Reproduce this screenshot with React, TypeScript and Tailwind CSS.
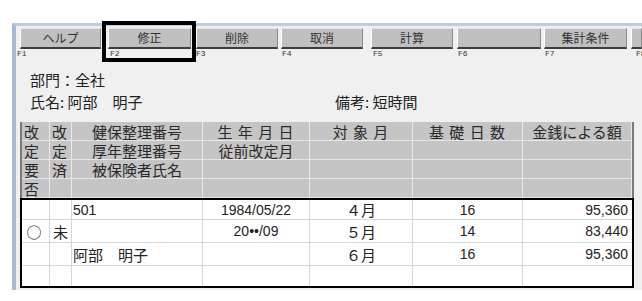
import React from 'react'

const tools = [
  { label: 'ヘルプ', f: 'F1', col: 'w-[88px]', btn: 'ml-[3px] w-[81px]', fl: 'ml-0' },
  { label: '修正', f: 'F2', col: 'w-[89px]', btn: 'ml-[3px] w-[83px]', fl: 'ml-[5px]' },
  { label: '削除', f: 'F3', col: 'w-[86px]', btn: 'ml-[2px] w-[82px]', fl: 'ml-[2px]' },
  { label: '取消', f: 'F4', col: 'w-[89px]', btn: 'ml-[1px] w-[82px]', fl: 'ml-[2px]' },
  { label: '計算', f: 'F5', col: 'w-[86px]', btn: 'ml-[2px] w-[82px]', fl: 'ml-[4px]' },
  { label: '', f: 'F6', col: 'w-[87px]', btn: 'ml-[2px] w-[84px]', fl: 'ml-[3px]' },
  { label: '集計条件', f: 'F7', col: 'w-[89px]', btn: 'ml-[2px] w-[83px]', fl: 'ml-[3px]' },
  { label: '', f: 'F8', col: 'w-[11px]', btn: 'ml-0 w-[11px]', fl: 'ml-[5px]' },
]

const cols = 'grid grid-cols-[28px_22px_131px_107px_103px_110px_109px]'

const header = [
  ['改', '改', '健保整理番号', '生 年 月 日', '対 象 月', '基 礎 日 数', '金銭による額'],
  ['定', '定', '厚年整理番号', '従前改定月', '', '', ''],
  ['要', '済', '被保険者氏名', '', '', '', ''],
  ['否', '', '', '', '', '', ''],
]

const rows = [
  { h: 'h-[20px]', c: ['', '', '501', '1984/05/22', '４月', '16', '95,360'] },
  { h: 'h-[23px]', c: ['○', '未', '', '20••/09', '５月', '14', '83,440'] },
  { h: 'h-[23px]', c: ['', '', '阿部　明子', '', '６月', '16', '95,360'] },
  { h: 'h-[20px]', c: ['', '', '', '', '', '', ''] },
]

// alignment per data column
const dataAlign = [
  'justify-center pr-[3px]',
  'justify-center',
  'justify-start pl-[1px]',
  'justify-center',
  'justify-center',
  'justify-center',
  'justify-end pr-[4px]',
]

const num = "font-['Liberation_Sans',sans-serif] text-[14px]"

export default function App() {
  return (
    <div className="relative w-[642px] h-[301px] overflow-hidden bg-white font-['Noto_Sans_CJK_JP',sans-serif] text-[#222]">
      {/* window */}
      <div className="ml-[12px] mt-[23px] h-[267px] border-t-[3px] border-t-[#bccde3] border-l-[4px] border-l-[#a9b9d0] bg-[#f0f0f0] pt-[2px] pl-[1px]">
        {/* function key toolbar */}
        <div className="flex">
          {tools.map((t) => (
            <div key={t.f} className={`${t.col} shrink-0 overflow-hidden`}>
              <div
                className={`${t.btn} h-[21px] flex items-center justify-center overflow-hidden whitespace-nowrap text-[12px] leading-none text-[#333] bg-[#c0c0c0] border-t border-t-[#e2e2e2] border-l border-l-white border-r border-r-[#8a8a8a] border-b-2 border-b-[#3c3c3c]`}
              >
                {t.label}
              </div>
              <div className={`${t.fl} h-[10px] text-[8px] leading-[10px] text-[#333] font-['Liberation_Mono',monospace]`}>
                {t.f}
              </div>
            </div>
          ))}
        </div>

        {/* info */}
        <div className="pl-[13px] mt-[11px] text-[15px] leading-[20px] text-[#222]">
          <div>部門：全社</div>
          <div className="flex mt-[2px]">
            <div className="w-[305px]">氏名: 阿部　明子</div>
            <div>備考: 短時間</div>
          </div>
        </div>

        {/* table */}
        <div className="ml-[3px] mt-[10px] w-[614px]">
          <div className={`${cols} border-l-2 border-l-[#7a7a7a] border-r-2 border-r-[#7a7a7a]`}>
            {header.map((r, ri) =>
              r.map((c, ci) => (
                <div
                  key={`${ri}-${ci}`}
                  className={`h-[19px] bg-[#c5c5c5] border-b border-b-[#e6e6e6] border-r border-r-[#e9e9e9] flex items-center text-[15px] leading-none text-[#2a2a2a] whitespace-nowrap ${
                    ci < 2 ? 'justify-start pl-[2px]' : 'justify-center'
                  } ${c.includes(' ') ? 'tracking-[1px]' : ''}`}
                >
                  {c}
                </div>
              ))
            )}
          </div>
          <div className={`${cols} border-2 border-black bg-white`}>
            {rows.map((r, ri) =>
              r.c.map((c, ci) => (
                <div
                  key={`${ri}-${ci}`}
                  className={`${r.h} flex items-center whitespace-nowrap ${dataAlign[ci]} ${
                    ri < rows.length - 1 ? 'border-b border-b-[#d6d6d6]' : ''
                  } ${ci < 6 ? 'border-r border-r-[#d6d6d6]' : ''} ${
                    /^[0-9,/•]+$/.test(c) ? num : 'text-[15px]'
                  } leading-none text-[#222]`}
                >
                  {c}
                </div>
              ))
            )}
          </div>
        </div>
      </div>

      {/* selection highlight over 修正 */}
      <div className="absolute left-[102px] top-[21px] w-[94px] h-[41px] border-[4px] border-black" />
    </div>
  )
}
